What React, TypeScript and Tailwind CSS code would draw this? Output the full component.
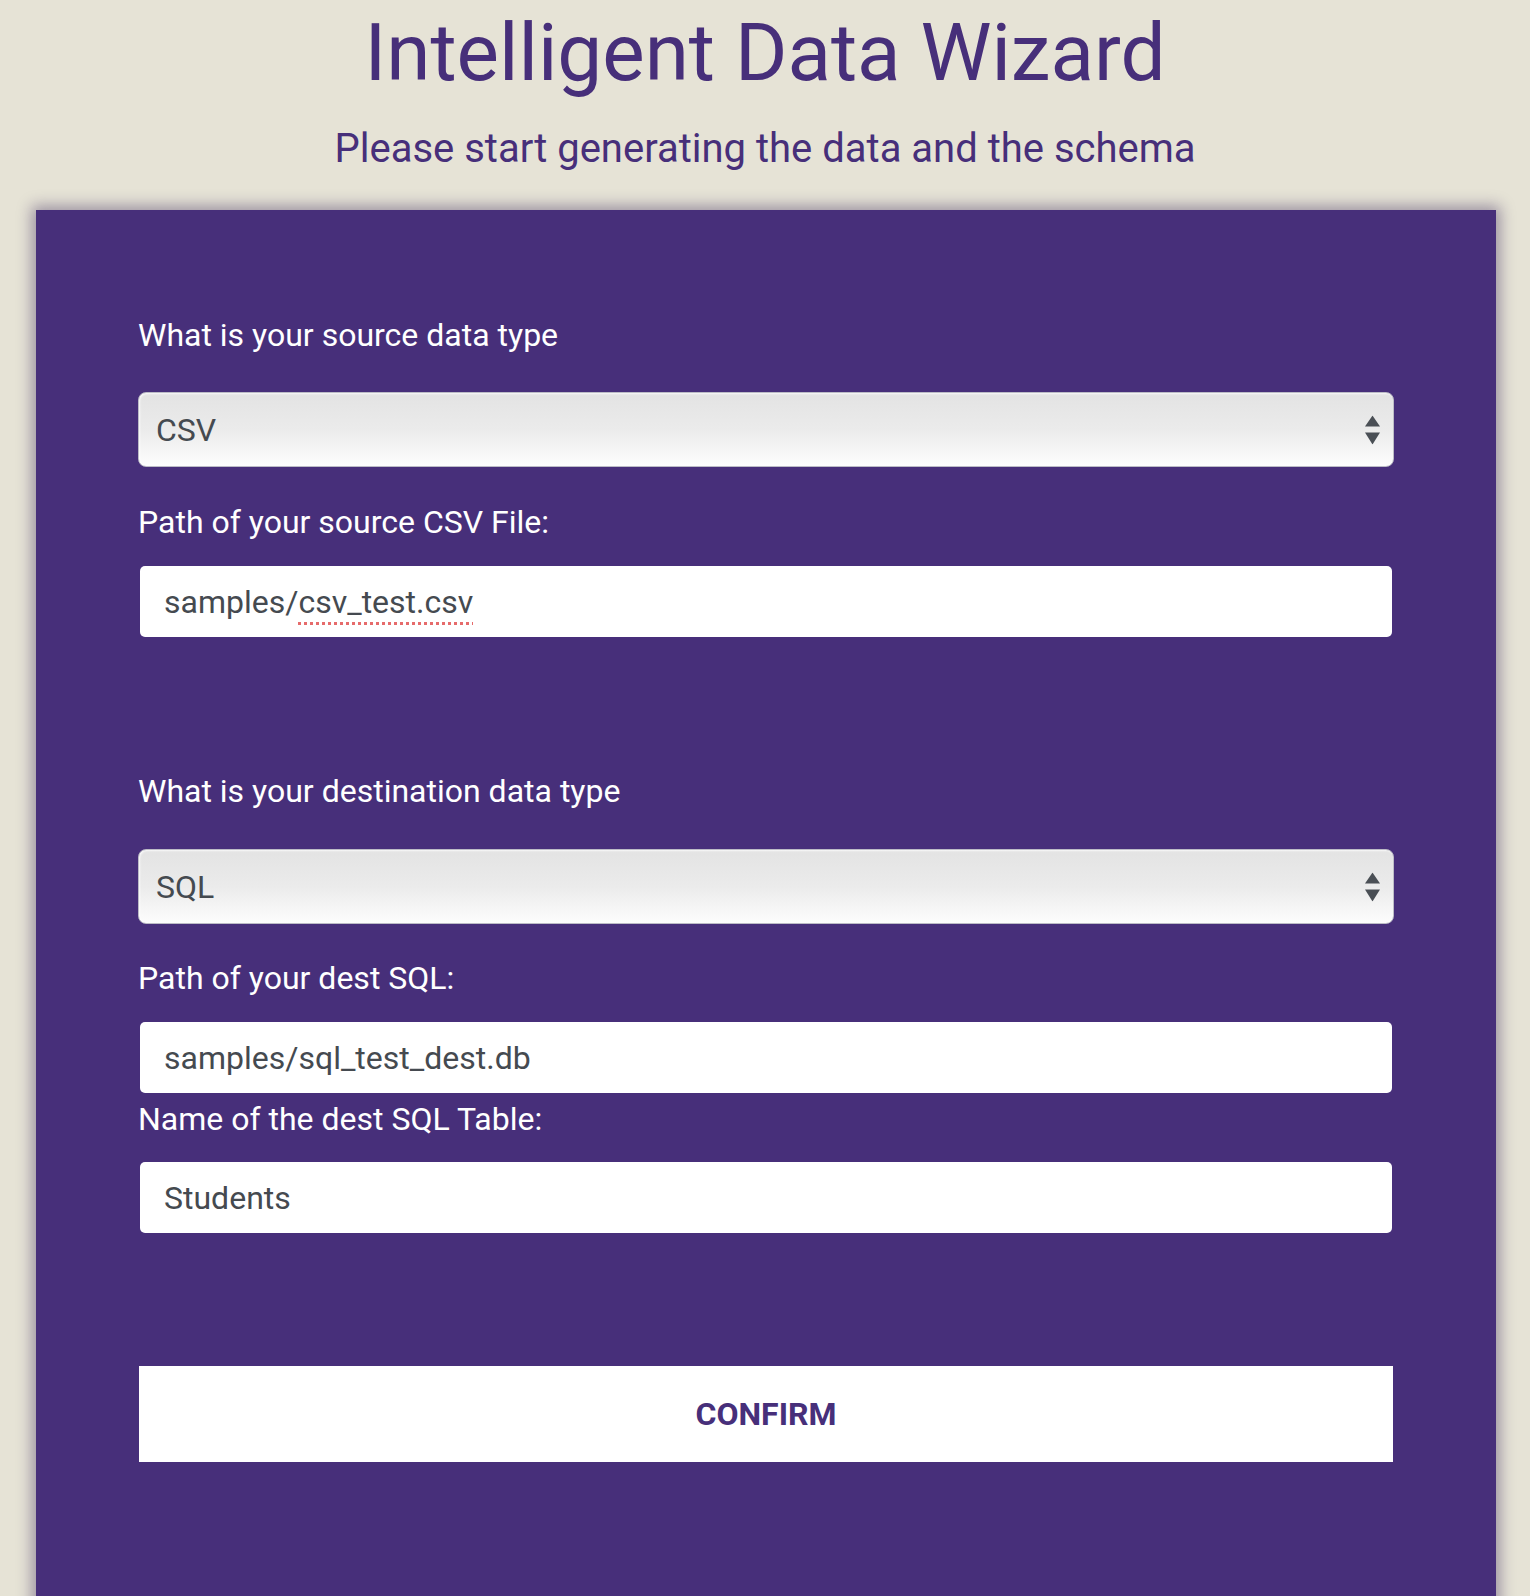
import React from "react";

const PURPLE = "#472f7a";

function Label({ children, className = "" }: { children: React.ReactNode; className?: string }) {
    return (
        <div className={`text-[32px] leading-[48px] text-white ${className}`}>
            {children}
        </div>
    );
}

function FakeSelect({ value, className = "" }: { value: string; className?: string }) {
    return (
        <div
            className={`relative h-[75px] rounded-[8px] border border-[#bcbcc6] bg-gradient-to-b from-[#e3e3e3] via-[#ebebeb] to-[#fdfdfd] shadow-[inset_1px_1px_2px_rgba(255,255,255,0.8)] flex items-center pl-[17px] text-[32px] text-[#454a50] ${className}`}
        >
            {value}
            <svg
                className="absolute right-[13px] top-1/2 -translate-y-1/2"
                width="15"
                height="29"
                viewBox="0 0 15 29"
            >
                <polygon points="7.5,0 15,11 0,11" fill="#4a4f55" />
                <polygon points="0,17 15,17 7.5,29" fill="#4a4f55" />
            </svg>
        </div>
    );
}

function Field({ children, className = "" }: { children: React.ReactNode; className?: string }) {
    return (
        <div
            className={`mx-[2px] h-[71px] rounded-[5px] bg-white flex items-center pl-[24px] text-[32px] text-[#454a50] ${className}`}
        >
            {children}
        </div>
    );
}

export default function App() {
    return (
        <div
            className="min-h-[1596px] bg-[#e6e3d6] overflow-hidden"
            style={{ fontFamily: "Roboto, 'Noto Sans', sans-serif" }}
        >
            <h1 className="mt-[13px] text-center text-[80px] leading-none text-[#472f7a]">
                Intelligent Data Wizard
            </h1>
            <h2 className="mt-[36px] text-center text-[40px] leading-none text-[#472f7a]">
                Please start generating the data and the schema
            </h2>

            <div
                className="ml-[36px] mr-[34px] mt-[41px] h-[1420px] px-[102px] pt-[101px] shadow-[0_0_14px_4px_rgba(40,20,80,0.4)]"
                style={{ backgroundColor: PURPLE }}
            >
                <Label>What is your source data type</Label>
                <FakeSelect value="CSV" className="mt-[33px]" />

                <Label className="mt-[31px]">Path of your source CSV File:</Label>
                <Field className="mt-[20px]">
                    samples/
                    <span className="underline decoration-dotted decoration-[#e66b6b] decoration-[3px] underline-offset-[9px]">
                        csv_test.csv
                    </span>
                </Field>

                <Label className="mt-[130px]">What is your destination data type</Label>
                <FakeSelect value="SQL" className="mt-[34px]" />

                <Label className="mt-[30px]">Path of your dest SQL:</Label>
                <Field className="mt-[20px]">samples/sql_test_dest.db</Field>

                <Label className="mt-[2px]">Name of the dest SQL Table:</Label>
                <Field className="mt-[19px]">Students</Field>

                <button
                    className="mt-[133px] mx-[1px] w-[calc(100%-2px)] h-[96px] bg-white text-[32px] font-bold text-[#472f7a] uppercase"
                >
                    Confirm
                </button>
            </div>
        </div>
    );
}
